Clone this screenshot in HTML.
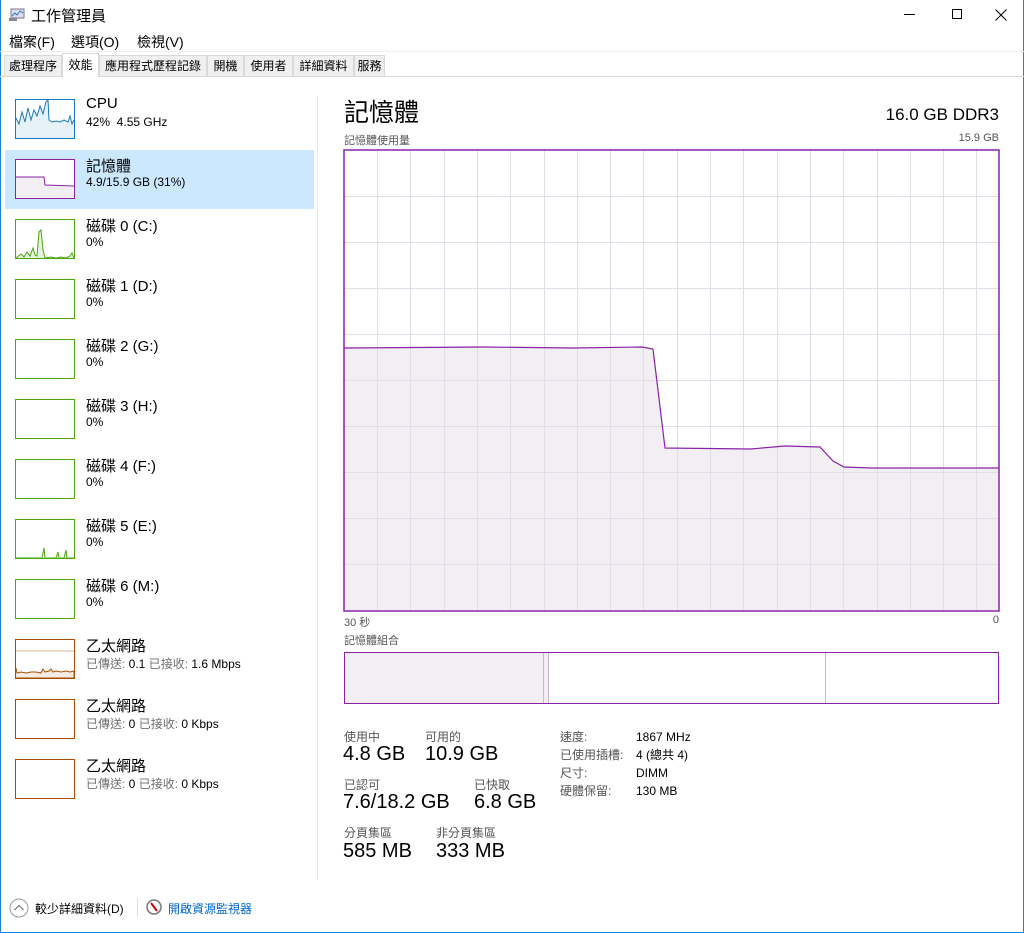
<!DOCTYPE html>
<html><head><meta charset="utf-8">
<style>
*{margin:0;padding:0;box-sizing:border-box}
body{width:1024px;height:933px;background:#fff;font-family:"Liberation Sans","Noto Sans CJK TC",sans-serif;color:#000;position:relative;overflow:hidden}
.a{position:absolute;white-space:nowrap}
.win{position:absolute;left:0;top:0;width:1024px;height:933px;border:1px solid #1883d7;border-top:none}
.tab{position:absolute;top:55px;height:21px;background:#f0f0f0;border:1px solid #d9d9d9;border-bottom:none;font-size:12px;line-height:20px;text-align:center}
.thumb{position:absolute;left:15px;width:60px;height:40px;border:1px solid}
.t1{position:absolute;left:86px;font-size:15px}
.t2{position:absolute;left:86px;font-size:12px}
.g{color:#707070}
.lbl{font-size:12px;color:#555}
.big{font-size:20px}
</style></head><body>
<div class="win"></div>
<svg class="a" style="left:9px;top:8px" width="16" height="14"><rect x="2" y="1" width="13" height="9" fill="#dde" stroke="#778"/><polyline points="3,8 6,5 8,7 11,3 14,5" fill="none" stroke="#2a7ac0"/><rect x="0" y="10" width="8" height="3" fill="#889"/></svg>
<div class="a" style="left:31px;top:5px;font-size:15px">工作管理員</div>
<div class="a" style="left:904px;top:14px;width:11px;height:1px;background:#000"></div>
<div class="a" style="left:952px;top:9px;width:10px;height:10px;border:1px solid #000"></div>
<svg class="a" style="left:995px;top:9px" width="12" height="12"><path d="M0.5 0.5L11.5 11.5M11.5 0.5L0.5 11.5" stroke="#000"/></svg>
<div class="a" style="left:9px;top:32px;font-size:14px">檔案(F)</div>
<div class="a" style="left:71px;top:32px;font-size:14px">選項(O)</div>
<div class="a" style="left:137px;top:32px;font-size:14px">檢視(V)</div>
<div class="a" style="left:0;top:51px;width:1024px;height:1px;background:#f0f0f0"></div>
<div class="a" style="left:0;top:76px;width:1024px;height:1px;background:#d9d9d9"></div>
<div class="tab" style="left:4px;width:58px">處理程序</div>
<div class="tab" style="left:62px;top:53px;height:24px;width:37px;background:#fff;z-index:2;line-height:22px">效能</div>
<div class="tab" style="left:99px;width:108px">應用程式歷程記錄</div>
<div class="tab" style="left:207px;width:37px">開機</div>
<div class="tab" style="left:244px;width:49px">使用者</div>
<div class="tab" style="left:293px;width:61px">詳細資料</div>
<div class="tab" style="left:354px;width:31px">服務</div>
<div class="a" style="left:5px;top:150px;width:309px;height:59px;background:#cce8ff"></div>
<div class="a" style="left:317px;top:96px;width:1px;height:784px;background:#e6e6e6"></div>

<div class="thumb" style="top:99px;border-color:#1779ba;background:#fff"><svg width="58" height="38" style="display:block"><polygon points="0,38 0,18 3,24 6,12 9,22 12,8 15,20 18,10 21,16 24,6 27,14 30,2 32,0 33,20 36,22 40,21 44,22 48,20 52,22 54,16 56,24 58,20 58,38" fill="#e6f1f8"/><polyline points="0,18 3,24 6,12 9,22 12,8 15,20 18,10 21,16 24,6 27,14 30,2 32,0 33,20 36,22 40,21 44,22 48,20 52,22 54,16 56,24 58,20" fill="none" stroke="#1779ba"/></svg></div>
<div class="t1" style="top:95px">CPU</div><div class="t2" style="top:115px">42%&nbsp; 4.55 GHz</div>

<div class="thumb" style="top:159px;border-color:#8b21a8;background:#fff"><svg width="58" height="38" style="display:block"><polygon points="0,17 28,17 29,25 58,26 58,38 0,38" fill="#f1eff3"/><polyline points="0,17 28,17 29,25 58,26" fill="none" stroke="#8b21a8"/></svg></div>
<div class="t1" style="top:155px">記憶體</div><div class="t2" style="top:175px">4.9/15.9 GB (31%)</div>

<div class="thumb" style="top:219px;border-color:#4da60c"><svg width="58" height="38" style="display:block"><polyline points="0,38 5,34 8,37 11,32 14,36 17,28 19,35 21,36 23,12 25,10 27,30 29,38 35,37 40,38 45,37 50,38 54,36 56,33 58,38" fill="#e6f2dd" stroke="#4da60c"/></svg></div>
<div class="t1" style="top:215px">磁碟 0 (C:)</div><div class="t2" style="top:235px">0%</div>
<div class="thumb" style="top:279px;border-color:#4da60c"></div>
<div class="t1" style="top:275px">磁碟 1 (D:)</div><div class="t2" style="top:295px">0%</div>
<div class="thumb" style="top:339px;border-color:#4da60c"></div>
<div class="t1" style="top:335px">磁碟 2 (G:)</div><div class="t2" style="top:355px">0%</div>
<div class="thumb" style="top:399px;border-color:#4da60c"></div>
<div class="t1" style="top:395px">磁碟 3 (H:)</div><div class="t2" style="top:415px">0%</div>
<div class="thumb" style="top:459px;border-color:#4da60c"></div>
<div class="t1" style="top:455px">磁碟 4 (F:)</div><div class="t2" style="top:475px">0%</div>
<div class="thumb" style="top:519px;border-color:#4da60c"><svg width="58" height="38" style="display:block"><polyline points="0,38 26,38 28,28 29,38 40,38 42,32 43,38 48,38 50,30 51,38 58,38" fill="#e6f2dd" stroke="#4da60c"/></svg></div>
<div class="t1" style="top:515px">磁碟 5 (E:)</div><div class="t2" style="top:535px">0%</div>
<div class="thumb" style="top:579px;border-color:#4da60c"></div>
<div class="t1" style="top:575px">磁碟 6 (M:)</div><div class="t2" style="top:595px">0%</div>

<div class="thumb" style="top:639px;border-color:#a74f01"><svg width="58" height="38" style="display:block"><line x1="0" y1="11" x2="58" y2="11" stroke="#d9b89a"/><polyline points="0,28 1,33 5,32 10,33 15,32 20,32 25,33 27,29 29,32 33,31 35,29 37,32 40,31 45,32 50,31 54,32 58,31 58,38 0,38" fill="#f6ece3" stroke="#a74f01"/></svg></div>
<div class="t1" style="top:635px">乙太網路</div><div class="t2" style="top:655px"><span class="g">已傳送:</span> 0.1 <span class="g">已接收:</span> 1.6 Mbps</div>
<div class="thumb" style="top:699px;border-color:#a74f01"></div>
<div class="t1" style="top:695px">乙太網路</div><div class="t2" style="top:715px"><span class="g">已傳送:</span> 0 <span class="g">已接收:</span> 0 Kbps</div>
<div class="thumb" style="top:759px;border-color:#a74f01"></div>
<div class="t1" style="top:755px">乙太網路</div><div class="t2" style="top:775px"><span class="g">已傳送:</span> 0 <span class="g">已接收:</span> 0 Kbps</div>

<div class="a" style="left:344px;top:93px;font-size:25px">記憶體</div>
<div class="a" style="right:25px;top:105px;font-size:17px">16.0 GB DDR3</div>
<div class="a lbl" style="left:344px;top:132px;font-size:11px">記憶體使用量</div>
<div class="a lbl" style="right:25px;top:132px;font-size:11px">15.9 GB</div>
<svg class="a" style="left:343px;top:149px" width="657" height="463">
<polygon points="1,199 139,198 230,199 299,198 310,200 322,299 408,300 442,297 477,298 490,312 501,318 529,319 656,319 656,461 1,461" fill="#f1eff3"/>
<g stroke="#e3dde8" stroke-width="1">
<path d="M34.5 0V462M67.5 0V462M101.5 0V462M134.5 0V462M167.5 0V462M201.5 0V462M234.5 0V462M267.5 0V462M300.5 0V462M334.5 0V462M367.5 0V462M400.5 0V462M434.5 0V462M467.5 0V462M500.5 0V462M534.5 0V462M567.5 0V462M600.5 0V462M633.5 0V462"/>
<path d="M0 47.5H656M0 93.5H656M0 139.5H656M0 185.5H656M0 231.5H656M0 277.5H656M0 323.5H656M0 369.5H656M0 415.5H656"/>
</g>
<polyline points="1,199 139,198 230,199 299,198 310,200 322,299 408,300 442,297 477,298 490,312 501,318 529,319 656,319" fill="none" stroke="#8b21a8" stroke-width="1.2"/>
<rect x="1" y="1" width="655" height="461" fill="none" stroke="#8b21a8" stroke-width="1.5"/>
</svg>
<div class="a lbl" style="left:344px;top:614px;font-size:11px">30 秒</div>
<div class="a lbl" style="right:25px;top:614px;font-size:11px">0</div>
<div class="a lbl" style="left:344px;top:632px;font-size:11px">記憶體組合</div>
<div class="a" style="left:344px;top:652px;width:655px;height:52px;border:1.5px solid #8b21a8"></div>
<div class="a" style="left:345px;top:653px;width:198px;height:50px;background:#f1eff3"></div>
<div class="a" style="left:543px;top:653px;width:6px;height:50px;background:#f1eff3;border-left:1px solid #c9b6d2;border-right:1px solid #c9b6d2"></div>
<div class="a" style="left:825px;top:653px;width:1px;height:50px;background:#c9b6d2"></div>

<div class="a lbl" style="left:344px;top:728px">使用中</div><div class="a big" style="left:343px;top:743px">4.8 GB</div>
<div class="a lbl" style="left:425px;top:728px">可用的</div><div class="a big" style="left:425px;top:743px">10.9 GB</div>
<div class="a lbl" style="left:344px;top:776px">已認可</div><div class="a big" style="left:343px;top:791px">7.6/18.2 GB</div>
<div class="a lbl" style="left:474px;top:776px">已快取</div><div class="a big" style="left:474px;top:791px">6.8 GB</div>
<div class="a lbl" style="left:344px;top:824px">分頁集區</div><div class="a big" style="left:343px;top:840px">585 MB</div>
<div class="a lbl" style="left:436px;top:824px">非分頁集區</div><div class="a big" style="left:436px;top:840px">333 MB</div>
<div class="a lbl" style="left:560px;top:728px;line-height:18px">速度:<br>已使用插槽:<br>尺寸:<br>硬體保留:</div>
<div class="a" style="left:636px;top:728px;font-size:12px;line-height:18px">1867 MHz<br>4 (總共 4)<br>DIMM<br>130 MB</div>

<svg class="a" style="left:9px;top:898px" width="20" height="20"><circle cx="10" cy="10" r="9" fill="none" stroke="#999"/><path d="M5.5 12L10 7.5L14.5 12" fill="none" stroke="#666"/></svg>
<div class="a" style="left:35px;top:900px;font-size:12px">較少詳細資料(D)</div>
<div class="a" style="left:137px;top:898px;width:1px;height:18px;background:#ddd"></div>
<svg class="a" style="left:146px;top:899px" width="16" height="16"><circle cx="8" cy="8" r="7" fill="#fff" stroke="#777" stroke-width="1.5"/><path d="M5 4L11 12" stroke="#c00" stroke-width="2"/></svg>
<div class="a" style="left:168px;top:900px;font-size:12px;color:#0066cc">開啟資源監視器</div>
</body></html>
